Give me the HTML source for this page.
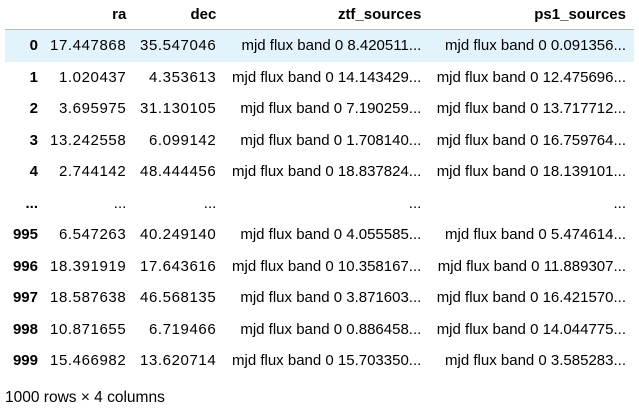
<!DOCTYPE html>
<html><head><style>
body{margin:0;background:#fff;font-family:"Liberation Sans",Arial,sans-serif;color:#000;}
table{position:absolute;left:5px;top:0;border-collapse:collapse;font-size:15px;width:629px;}
th,td{text-align:right;padding:0 8px 0 4px;height:31.5px;white-space:nowrap;}
td.n{letter-spacing:0.6px;}
thead th{height:29px;border-bottom:1px solid #bdbdbd;padding-bottom:0;}
tbody th{font-weight:bold;}
tbody tr:nth-child(odd){background:#f5f5f5;}
tbody tr.hl{background:#e3f3fc;}
.c0{width:29px}.c1{width:75px}.c2{width:78px}.c3{width:193px}
.foot{position:absolute;left:5px;top:389px;font-size:15.5px;}
</style></head><body>
<table>
<thead><tr><th class="c0"></th><th class="c1">ra</th><th class="c2">dec</th><th class="c3">ztf_sources</th><th>ps1_sources</th></tr></thead>
<tbody>
<tr class="hl"><th>0</th><td class="n">17.447868</td><td class="n">35.547046</td><td>mjd flux band 0 8.420511...</td><td>mjd flux band 0 0.091356...</td></tr>
<tr><th>1</th><td class="n">1.020437</td><td class="n">4.353613</td><td>mjd flux band 0 14.143429...</td><td>mjd flux band 0 12.475696...</td></tr>
<tr style="background:#fff"><th>2</th><td class="n">3.695975</td><td class="n">31.130105</td><td>mjd flux band 0 7.190259...</td><td>mjd flux band 0 13.717712...</td></tr>
<tr><th>3</th><td class="n">13.242558</td><td class="n">6.099142</td><td>mjd flux band 0 1.708140...</td><td>mjd flux band 0 16.759764...</td></tr>
<tr style="background:#fff"><th>4</th><td class="n">2.744142</td><td class="n">48.444456</td><td>mjd flux band 0 18.837824...</td><td>mjd flux band 0 18.139101...</td></tr>
<tr><th>...</th><td>...</td><td>...</td><td>...</td><td>...</td></tr>
<tr style="background:#fff"><th>995</th><td class="n">6.547263</td><td class="n">40.249140</td><td>mjd flux band 0 4.055585...</td><td>mjd flux band 0 5.474614...</td></tr>
<tr><th>996</th><td class="n">18.391919</td><td class="n">17.643616</td><td>mjd flux band 0 10.358167...</td><td>mjd flux band 0 11.889307...</td></tr>
<tr style="background:#fff"><th>997</th><td class="n">18.587638</td><td class="n">46.568135</td><td>mjd flux band 0 3.871603...</td><td>mjd flux band 0 16.421570...</td></tr>
<tr><th>998</th><td class="n">10.871655</td><td class="n">6.719466</td><td>mjd flux band 0 0.886458...</td><td>mjd flux band 0 14.044775...</td></tr>
<tr style="background:#fff"><th>999</th><td class="n">15.466982</td><td class="n">13.620714</td><td>mjd flux band 0 15.703350...</td><td>mjd flux band 0 3.585283...</td></tr>
</tbody></table>
<div class="foot">1000 rows × 4 columns</div>
</body></html>
